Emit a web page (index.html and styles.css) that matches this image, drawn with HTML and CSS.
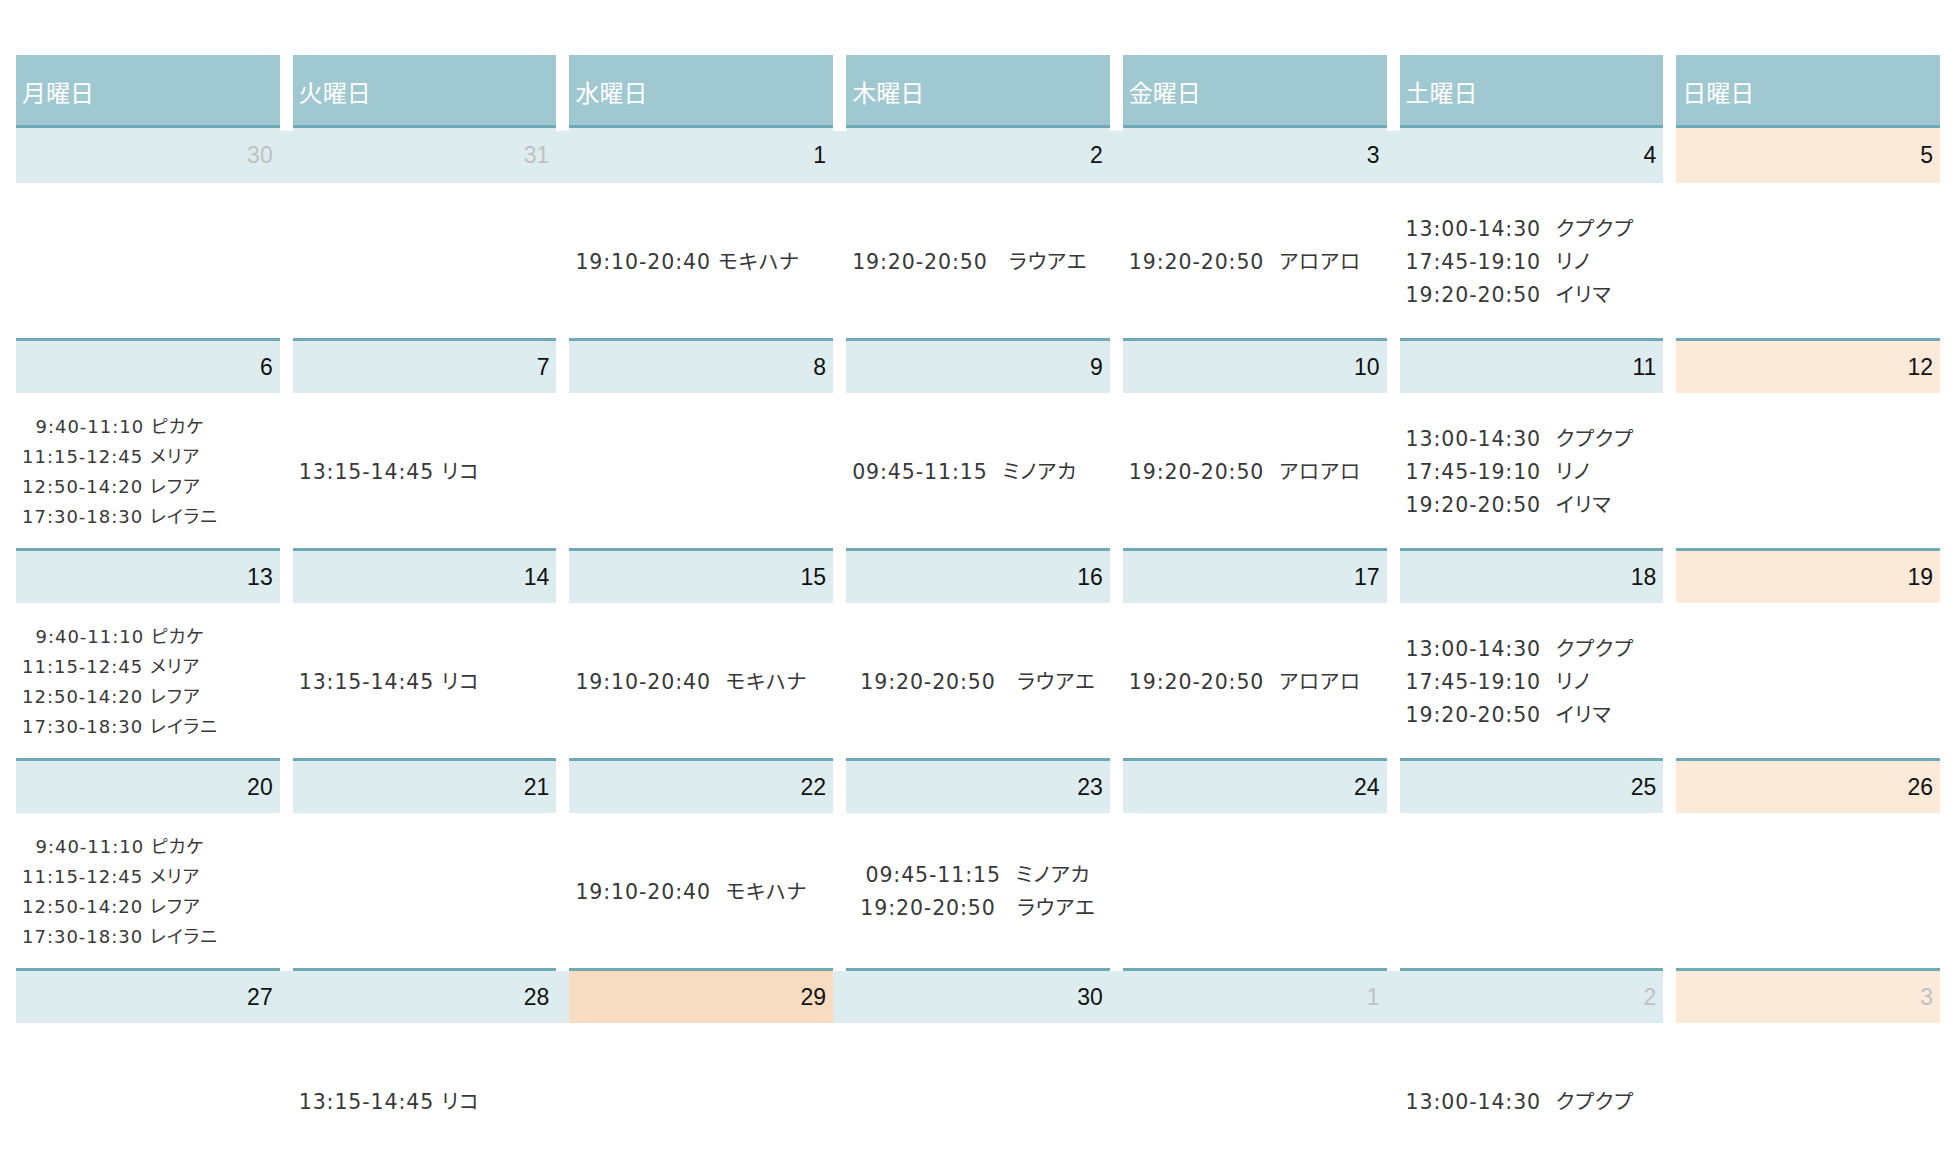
FILE: index.html
```html
<!DOCTYPE html>
<html lang="ja">
<head>
<meta charset="utf-8">
<title>カレンダー</title>
<link rel="stylesheet" href="styles.css">
</head>
<body>
<div class="cal">
  <div class="head">
    <div class="hcell">月曜日</div>
    <div class="hcell">火曜日</div>
    <div class="hcell">水曜日</div>
    <div class="hcell">木曜日</div>
    <div class="hcell">金曜日</div>
    <div class="hcell">土曜日</div>
    <div class="hcell">日曜日</div>
  </div>

  <div class="week">
    <div class="dates first filled">
      <div class="d out">30</div>
      <div class="d out">31</div>
      <div class="d">1</div>
      <div class="d">2</div>
      <div class="d">3</div>
      <div class="d">4</div>
      <div class="d sun">5</div>
    </div>
    <div class="slots">
      <div class="slot"></div>
      <div class="slot"></div>
      <div class="slot">19:10-20:40 モキハナ</div>
      <div class="slot">19:20-20:50　ラウアエ</div>
      <div class="slot">19:20-20:50  アロアロ</div>
      <div class="slot">13:00-14:30  クプクプ
17:45-19:10  リノ
19:20-20:50  イリマ</div>
      <div class="slot"></div>
    </div>
  </div>

  <div class="week">
    <div class="dates">
      <div class="d">6</div>
      <div class="d">7</div>
      <div class="d">8</div>
      <div class="d">9</div>
      <div class="d">10</div>
      <div class="d">11</div>
      <div class="d sun">12</div>
    </div>
    <div class="slots">
      <div class="slot small">  9:40-11:10 ピカケ
11:15-12:45 メリア
12:50-14:20 レフア
17:30-18:30 レイラニ</div>
      <div class="slot">13:15-14:45 リコ</div>
      <div class="slot"></div>
      <div class="slot">09:45-11:15  ミノアカ</div>
      <div class="slot">19:20-20:50  アロアロ</div>
      <div class="slot">13:00-14:30  クプクプ
17:45-19:10  リノ
19:20-20:50  イリマ</div>
      <div class="slot"></div>
    </div>
  </div>

  <div class="week">
    <div class="dates">
      <div class="d">13</div>
      <div class="d">14</div>
      <div class="d">15</div>
      <div class="d">16</div>
      <div class="d">17</div>
      <div class="d">18</div>
      <div class="d sun">19</div>
    </div>
    <div class="slots">
      <div class="slot small">  9:40-11:10 ピカケ
11:15-12:45 メリア
12:50-14:20 レフア
17:30-18:30 レイラニ</div>
      <div class="slot">13:15-14:45 リコ</div>
      <div class="slot">19:10-20:40  モキハナ</div>
      <div class="slot center">19:20-20:50　ラウアエ</div>
      <div class="slot">19:20-20:50  アロアロ</div>
      <div class="slot">13:00-14:30  クプクプ
17:45-19:10  リノ
19:20-20:50  イリマ</div>
      <div class="slot"></div>
    </div>
  </div>

  <div class="week">
    <div class="dates">
      <div class="d">20</div>
      <div class="d">21</div>
      <div class="d">22</div>
      <div class="d">23</div>
      <div class="d">24</div>
      <div class="d">25</div>
      <div class="d sun">26</div>
    </div>
    <div class="slots">
      <div class="slot small">  9:40-11:10 ピカケ
11:15-12:45 メリア
12:50-14:20 レフア
17:30-18:30 レイラニ</div>
      <div class="slot"></div>
      <div class="slot">19:10-20:40  モキハナ</div>
      <div class="slot center">09:45-11:15  ミノアカ
19:20-20:50　ラウアエ</div>
      <div class="slot"></div>
      <div class="slot"></div>
      <div class="slot"></div>
    </div>
  </div>

  <div class="week">
    <div class="dates filled">
      <div class="d">27</div>
      <div class="d">28</div>
      <div class="d hol">29</div>
      <div class="d">30</div>
      <div class="d out">1</div>
      <div class="d out">2</div>
      <div class="d sun out">3</div>
    </div>
    <div class="slots">
      <div class="slot"></div>
      <div class="slot">13:15-14:45 リコ</div>
      <div class="slot"></div>
      <div class="slot"></div>
      <div class="slot"></div>
      <div class="slot">13:00-14:30  クプクプ</div>
      <div class="slot"></div>
    </div>
  </div>
</div>
</body>
</html>
```

FILE: styles.css
```css
* { box-sizing: border-box; }

html, body {
  margin: 0;
  background: #ffffff;
}

body {
  padding: 55px 19px 0 16px;
  overflow: hidden;
}

.cal {
  width: 1924px;
}

.head,
.dates,
.slots {
  display: grid;
  grid-template-columns: repeat(7, 1fr);
  column-gap: 13px;
}

.hcell {
  height: 73px;
  background: #a0c8d0;
  border-bottom: 3px solid #6fa9b6;
  color: #ffffff;
  font-family: "Noto Sans CJK JP", sans-serif;
  font-size: 24px;
  line-height: 1;
  padding: 4px 6px 0;
  display: flex;
  align-items: center;
}

.d {
  height: 55px;
  background: #ddecef;
  border-top: 3px solid #6fa9b6;
  display: flex;
  align-items: center;
  justify-content: flex-end;
  padding: 0 7px 0 0;
  font-family: "Liberation Sans", Arial, sans-serif;
  font-size: 23px;
  color: #111111;
}

.dates.first .d {
  border-top: none;
}

.dates.filled {
  background: linear-gradient(90deg, #ddecef calc((100% + 13px) * 6 / 7 - 13px), transparent 0) 0 100% / 100% 52px no-repeat;
}

.d.sun { background: #fbe9da; }
.d.hol { background: #f8dcc2; }
.d.out { color: #c0c0c0; }

.slot {
  height: 155px;
  display: flex;
  flex-direction: column;
  justify-content: center;
  padding: 3px 6px 0;
  white-space: pre;
  font-family: "DejaVu Sans", "Noto Sans CJK JP", sans-serif;
  font-feature-settings: "palt";
  font-size: 20.5px;
  letter-spacing: 0.9px;
  line-height: 33px;
  color: #383838;
}

.slot.small {
  font-size: 18px;
  letter-spacing: 1px;
  line-height: 30px;
}

.slot.center {
  text-align: center;
}
```
